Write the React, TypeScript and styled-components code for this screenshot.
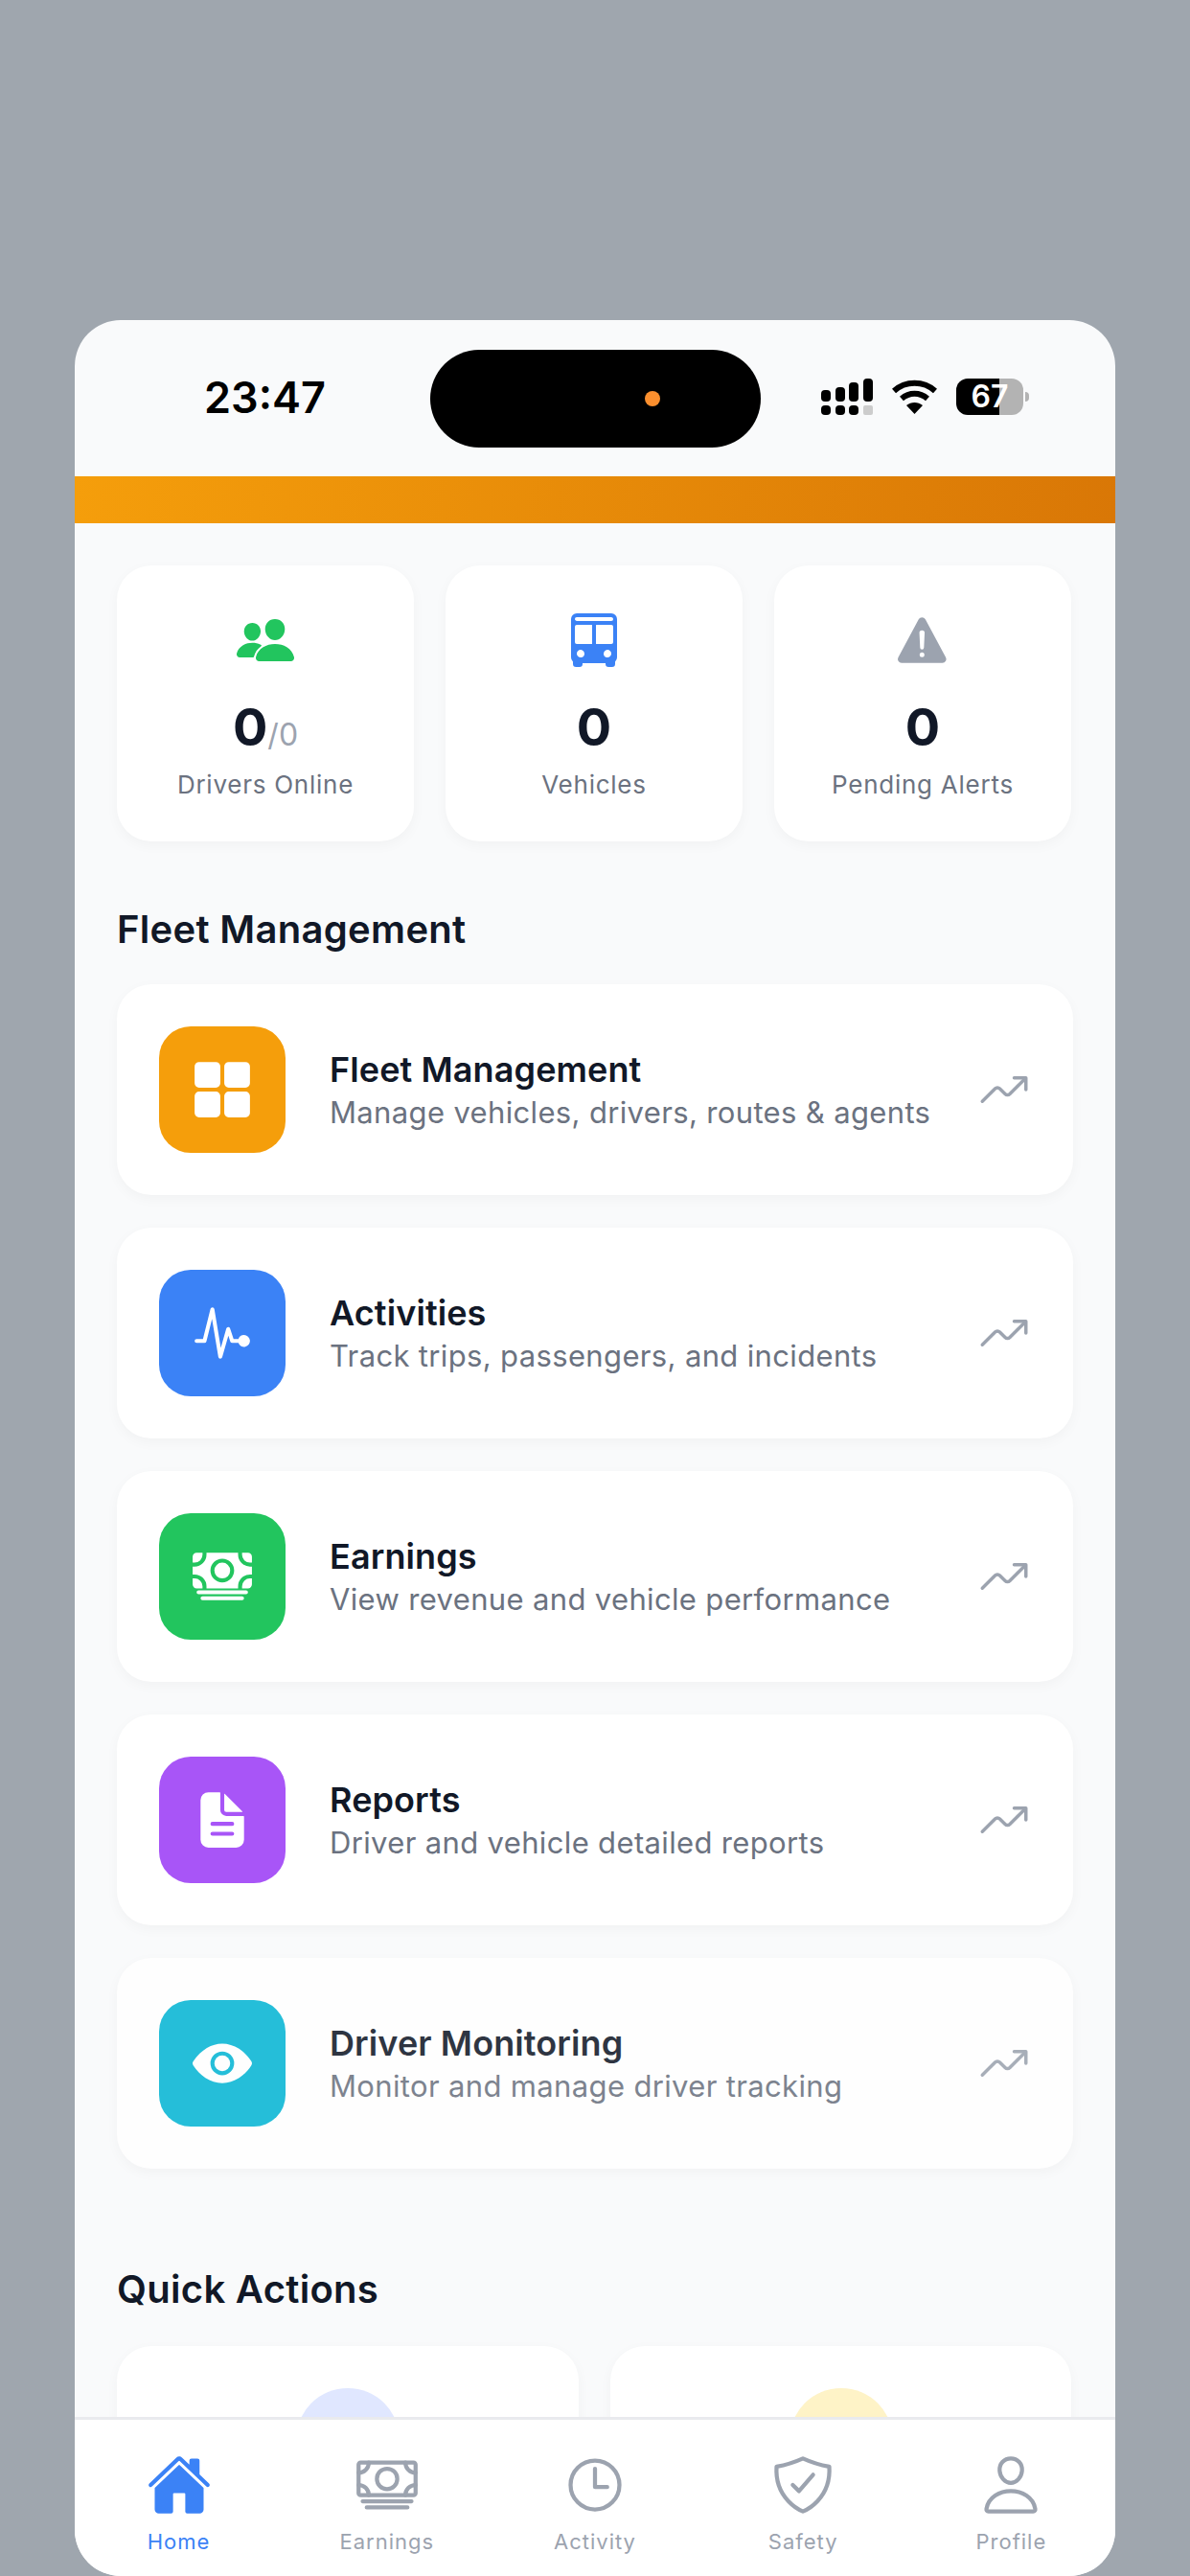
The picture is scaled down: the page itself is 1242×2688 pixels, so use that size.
import React from "react";
import styled, { createGlobalStyle } from "styled-components";
import {
  IoPeople, IoBus, IoWarning, IoGrid, IoPulse, IoCash, IoDocumentText, IoEye,
  IoHome, IoCashOutline, IoTimeOutline, IoShieldCheckmarkOutline, IoPersonOutline, IoTrendingUpOutline,
} from "react-icons/io5";

const Global = createGlobalStyle`
  html, body { margin: 0; padding: 0; background: #9fa6ae; }
  body { font-family: Inter, "Noto Sans", sans-serif; }
  * { box-sizing: border-box; }
`;

const Page = styled.div`
  width: 1242px; height: 2688px; padding: 334px 78px 0; overflow: hidden;
`;
const Phone = styled.div`
  width: 1086px; height: 2354px; background: #f9fafb; overflow: hidden;
  border-radius: 48px; display: flex; flex-direction: column;
`;
const StatusBar = styled.div`
  height: 163px; flex: none; display: flex; align-items: flex-start; padding: 31px 0 0 135px;
`;
const Time = styled.div`
  width: 236px; height: 102px; line-height: 100px; font-size: 45px; font-weight: 600; color: #000;
`;
const Island = styled.div`
  width: 345px; height: 102px; border-radius: 51px; background: #000; flex: none;
  display: flex; align-items: center; justify-content: flex-end; padding-right: 105px;
`;
const Dot = styled.div`width: 16px; height: 16px; border-radius: 50%; background: #fb8f2e;`;
const StatusIcons = styled.div`
  display: flex; align-items: center; height: 40px; margin: 29px 0 0 63px;
`;
const Battery = styled.div`
  position: relative; width: 70px; height: 38px; margin-left: 20px; border-radius: 12px; overflow: hidden;
  background: linear-gradient(90deg, #000 0 65%, #b3b3b3 65% 100%);
  color: #fff; font-size: 32px; font-weight: 600; line-height: 38px; text-align: center;
`;
const Nub = styled.div`
  width: 4px; height: 10px; margin-left: 2px; border-radius: 0 4px 4px 0; background: #b3b3b3;
`;
const Header = styled.div`
  height: 49px; flex: none; background: linear-gradient(100deg, #f59e0b, #d97706);
`;
const Scroll = styled.div`
  flex: 1; min-height: 0; overflow: hidden; padding: 44px 44px 0;
`;
const Stats = styled.div`display: grid; grid-template-columns: repeat(3, 310px); gap: 33px;`;
const StatCard = styled.div`
  height: 288px; background: #fff; border-radius: 36px; padding-top: 44px;
  box-shadow: 0 4px 14px rgba(17, 24, 39, .035);
  display: flex; flex-direction: column; align-items: center;
`;
const StatIcon = styled.div<{ $color: string }>`
  height: 68px; display: flex; align-items: center; justify-content: center; color: ${(p) => p.$color};
  font-size: 64px;
`;
const StatValue = styled.div`
  margin-top: 26px; height: 62px; line-height: 62px; font-size: 54px; font-weight: 700; color: #111827;
`;
const StatTotal = styled.span`font-size: 32px; font-weight: 400; color: #9ca3af;`;
const StatLabel = styled.div`
  margin-top: 11px; font-size: 26px; line-height: 36px; letter-spacing: .75px; color: #6b7280;
`;
const SectionTitle = styled.div<{ $top: number; $bottom: number }>`
  margin: ${(p) => p.$top}px 0 ${(p) => p.$bottom}px; font-size: 40px; font-weight: 600; line-height: 48px;
  letter-spacing: .3px; color: #111827;
`;
const List = styled.div`display: flex; flex-direction: column; gap: 34px;`;
const Row = styled.div<{ $fading?: boolean }>`
  height: 220px; background: #fff; border-radius: 36px; padding: 0 44px;
  box-shadow: 0 4px 14px rgba(17, 24, 39, .035);
  display: flex; align-items: center;
  opacity: ${(p) => (p.$fading ? 0.87 : 1)};
`;
const Tile = styled.div<{ $color: string }>`
  width: 132px; height: 132px; border-radius: 33px; background: ${(p) => p.$color}; flex: none; color: #fff;
  display: flex; align-items: center; justify-content: center; font-size: 66px;
`;
const RowText = styled.div`flex: 1; margin-left: 46px; display: flex; flex-direction: column;`;
const RowTitle = styled.div`font-size: 36px; font-weight: 600; line-height: 44px; letter-spacing: .1px; color: #111827;`;
const RowSub = styled.div`margin-top: 3px; font-size: 31px; line-height: 40px; letter-spacing: .35px; color: #6b7280;`;
const Trend = styled.div`color: #9ca3af; font-size: 56px; display: flex;`;
const Quick = styled.div`display: grid; grid-template-columns: 482px 481px; gap: 33px;`;
const QuickCard = styled.div`
  height: 300px; background: #fff; border-radius: 36px; padding-top: 44px;
  box-shadow: 0 4px 14px rgba(17, 24, 39, .035);
  display: flex; justify-content: center;
`;
const QuickCircle = styled.div<{ $color: string }>`
  width: 108px; height: 108px; border-radius: 50%; background: ${(p) => p.$color};
`;
const TabBar = styled.div`
  height: 166px; flex: none; background: #fff; border-top: 3px solid #e9eaee;
  display: grid; grid-template-columns: repeat(5, 1fr);
`;
const Tab = styled.div<{ $active?: boolean }>`
  display: flex; flex-direction: column; align-items: center; padding-top: 34px;
  color: ${(p) => (p.$active ? "#3b82f6" : "#9ca3af")};
`;
const TabIcon = styled.div`height: 68px; font-size: 68px; display: flex; align-items: center;`;
const TabLabel = styled.div`margin-top: 10px; font-size: 22px; line-height: 30px; letter-spacing: 1px;`;

const Signal = () => (
  <svg width="54" height="38" viewBox="0 0 54 38" fill="#000">
    <rect x="0" y="12" width="10" height="12" rx="4" />
    <rect x="15" y="9" width="10" height="15" rx="4" />
    <rect x="29" y="4" width="10" height="20" rx="4" />
    <rect x="44" y="0" width="10" height="24" rx="4" />
    <rect x="0" y="28" width="10" height="10" rx="4" />
    <rect x="15" y="28" width="10" height="10" rx="4" />
    <rect x="29" y="28" width="10" height="10" rx="4" />
    <rect x="44" y="28" width="10" height="10" rx="2" fill="#cccccc" />
  </svg>
);
const Wifi = () => (
  <svg width="47" height="36" viewBox="0 0 47 36" style={{ marginLeft: 20 }} fill="none" stroke="#000" strokeWidth="6">
    <path d="M2 12 C14 1 33 1 45 12" />
    <path d="M10 20 C18 13 29 13 37 20" />
    <path fill="#000" stroke="none" d="M15 27 C20 23 27 23 32 27 L23.500 36 Z" />
  </svg>
);

const rows = [
  { c: "#f59e0b", i: <IoGrid />, t: "Fleet Management", s: "Manage vehicles, drivers, routes & agents" },
  { c: "#3b82f6", i: <IoPulse />, t: "Activities", s: "Track trips, passengers, and incidents" },
  { c: "#22c55e", i: <IoCash />, t: "Earnings", s: "View revenue and vehicle performance" },
  { c: "#a855f7", i: <IoDocumentText />, t: "Reports", s: "Driver and vehicle detailed reports" },
  { c: "#06b6d4", i: <IoEye />, t: "Driver Monitoring", s: "Monitor and manage driver tracking", f: true },
];
const tabs = [
  { i: <IoHome />, l: "Home", a: true },
  { i: <IoCashOutline />, l: "Earnings" },
  { i: <IoTimeOutline />, l: "Activity" },
  { i: <IoShieldCheckmarkOutline />, l: "Safety" },
  { i: <IoPersonOutline />, l: "Profile" },
];

export default function App() {
  return (
    <Page>
      <Global />
      <Phone>
        <StatusBar>
          <Time>23:47</Time>
          <Island><Dot /></Island>
          <StatusIcons>
            <Signal />
            <Wifi />
            <Battery>67</Battery>
            <Nub />
          </StatusIcons>
        </StatusBar>
        <Header />
        <Scroll>
          <Stats>
            <StatCard>
              <StatIcon $color="#22c55e"><IoPeople /></StatIcon>
              <StatValue>0<StatTotal>/0</StatTotal></StatValue>
              <StatLabel>Drivers Online</StatLabel>
            </StatCard>
            <StatCard>
              <StatIcon $color="#3b82f6"><IoBus /></StatIcon>
              <StatValue>0</StatValue>
              <StatLabel>Vehicles</StatLabel>
            </StatCard>
            <StatCard>
              <StatIcon $color="#9ca3af"><IoWarning /></StatIcon>
              <StatValue>0</StatValue>
              <StatLabel>Pending Alerts</StatLabel>
            </StatCard>
          </Stats>
          <SectionTitle $top={68} $bottom={33}>Fleet Management</SectionTitle>
          <List>
            {rows.map((r) => (
              <Row key={r.t} $fading={r.f}>
                <Tile $color={r.c}>{r.i}</Tile>
                <RowText>
                  <RowTitle>{r.t}</RowTitle>
                  <RowSub>{r.s}</RowSub>
                </RowText>
                <Trend><IoTrendingUpOutline /></Trend>
              </Row>
            ))}
          </List>
          <SectionTitle $top={102} $bottom={35}>Quick Actions</SectionTitle>
          <Quick>
            <QuickCard><QuickCircle $color="#e0e7ff" /></QuickCard>
            <QuickCard><QuickCircle $color="#fef3c7" /></QuickCard>
          </Quick>
        </Scroll>
        <TabBar>
          {tabs.map((t) => (
            <Tab key={t.l} $active={t.a}>
              <TabIcon>{t.i}</TabIcon>
              <TabLabel>{t.l}</TabLabel>
            </Tab>
          ))}
        </TabBar>
      </Phone>
    </Page>
  );
}
